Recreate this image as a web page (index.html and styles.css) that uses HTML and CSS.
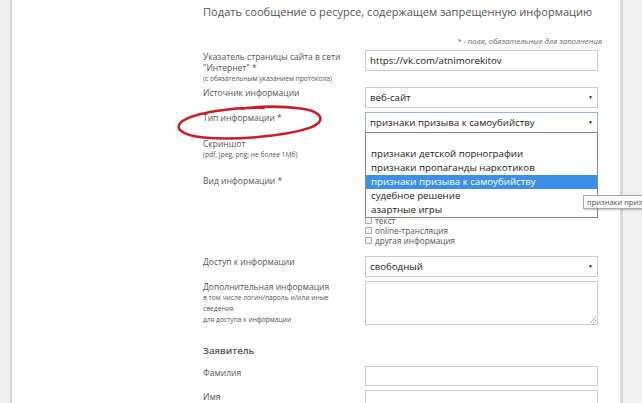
FILE: index.html
```html
<!DOCTYPE html>
<html lang="ru">

<head>
  <meta charset="UTF-8">
  <meta name="viewport" content="width=device-width, initial-scale=1.0">
  <title>Подать сообщение</title>
  <link rel="stylesheet" href="styles.css">
</head>

<body>
  <div class="side side-left"></div>

  <main class="panel">
    <h1 class="title">Подать сообщение о ресурсе, содержащем запрещенную информацию</h1>
    <p class="note">* - поля, обязательные для заполнения</p>

    <div class="row row-url">
      <div class="label">
        Указатель страницы сайта в сети<br>"Интернет" *
        <span class="hint">(с обязательным указанием протокола)</span>
      </div>
      <div class="field">
        <div class="input">https://vk.com/atnimorekitov</div>
      </div>
    </div>

    <div class="row row-select">
      <div class="label">Источник информации</div>
      <div class="field">
        <div class="select">веб-сайт<span class="arrow">▼</span></div>
      </div>
    </div>

    <div class="row row-type">
      <div class="label">Тип информации *</div>
      <div class="field">
        <div class="select focused">признаки призыва к самоубийству<span class="arrow">▼</span></div>
      </div>
    </div>

    <div class="row row-file">
      <div class="label">
        Скриншот
        <span class="hint">(pdf, jpeg, png; не более 1Мб)</span>
      </div>
      <div class="field"></div>
    </div>

    <div class="row row-kind">
      <div class="label">Вид информации *</div>
      <div class="field checks">
        <label class="check"><span class="box"></span>изображение</label>
        <label class="check"><span class="box"></span>видео</label>
        <label class="check"><span class="box"></span>аудио</label>
        <label class="check"><span class="box"></span>ссылка</label>
        <label class="check"><span class="box"></span>текст</label>
        <label class="check"><span class="box"></span>online-трансляция</label>
        <label class="check"><span class="box"></span>другая информация</label>
      </div>
    </div>

    <div class="row row-access">
      <div class="label">Доступ к информации</div>
      <div class="field">
        <div class="select">свободный<span class="arrow">▼</span></div>
      </div>
    </div>

    <div class="row row-extra">
      <div class="label">
        Дополнительная информация
        <span class="hint">в том числе логин/пароль и/или иные<br>сведения<br>для доступа к информации</span>
      </div>
      <div class="field">
        <div class="textarea"><span class="grip"></span></div>
      </div>
    </div>

    <h2 class="section">Заявитель</h2>

    <div class="row row-plain">
      <div class="label">Фамилия</div>
      <div class="field">
        <div class="input"></div>
      </div>
    </div>

    <div class="row row-plain">
      <div class="label">Имя</div>
      <div class="field">
        <div class="input"></div>
      </div>
    </div>

    <!-- open list of the "Тип информации" select -->
    <ul class="dropdown">
      <li class="empty"></li>
      <li>признаки детской порнографии</li>
      <li>признаки пропаганды наркотиков</li>
      <li class="active">признаки призыва к самоубийству</li>
      <li>судебное решение</li>
      <li>азартные игры</li>
    </ul>

    <div class="tooltip">признаки призыва к самоубийству</div>

    <svg class="marker" width="160" height="40" viewBox="0 0 160 40">
      <path d="M92 5 C60 3 22 7 8 16 C0 22 6 30 30 33 C60 37 110 35 138 27 C156 21 152 11 130 7 C112 4 90 3 70 5"
        fill="none" stroke="#cf1b25" stroke-width="2.6" stroke-linecap="round" />
    </svg>
  </main>

  <div class="side side-right"></div>
</body>

</html>
```

FILE: styles.css
```css
* {
  box-sizing: border-box;
}

html,
body {
  margin: 0;
  height: 100%;
  overflow: hidden;
}

body {
  display: flex;
  font-family: 'Open Sans', 'Noto Sans', sans-serif;
  color: #555;
  background: #fff;
}

.side {
  flex: none;
  height: 100%;
  background: #efefef;
}

.side-left {
  width: 12px;
  border-right: 2px solid #d4d4d4;
}

.side-right {
  width: 22px;
  border-left: 3px solid #d6d6d6;
  background: #f1f1f1;
}

.panel {
  position: relative;
  flex: 1;
  min-width: 0;
  padding-left: 191px;
}

.title {
  margin: 0;
  padding-top: 4px;
  font-size: 11.1px;
  font-weight: normal;
  line-height: 16px;
  white-space: nowrap;
  color: #555;
}

.note {
  width: 399px;
  margin: 16px 0 0;
  font-size: 7.8px;
  font-style: italic;
  line-height: 10px;
  text-align: right;
  color: #666;
}

.row {
  display: flex;
}

.label {
  width: 162px;
  flex: none;
  font-size: 8.5px;
  line-height: 11px;
  color: #555;
}

.hint {
  display: block;
  font-size: 6.7px;
  line-height: 11px;
}

.field {
  width: 233px;
  flex: none;
}

.input,
.select,
.textarea {
  position: relative;
  height: 21px;
  border: 1px solid #ccc;
  background: #fff;
  font-size: 9.7px;
  line-height: 19px;
  padding-left: 4px;
  color: #222;
}

.arrow {
  position: absolute;
  right: 4px;
  top: 0;
  font-size: 5px;
  color: #222;
}

.select.focused {
  border-color: #9fb4d8;
  border-bottom-color: #444;
}

.row-url {
  height: 34px;
  margin-top: 4px;
  margin-bottom: 3px;
}

.row-url .label {
  padding-top: 1px;
}

.row-select,
.row-access {
  height: 21px;
  margin-bottom: 4px;
}

.row-type {
  height: 21px;
  margin-bottom: 5px;
}

.row-file {
  height: 37px;
}

.row-kind {
  height: 70px;
  margin-bottom: 11px;
}

.checks {
  display: flex;
  flex-direction: column;
}

.check {
  display: flex;
  align-items: center;
  gap: 3px;
  height: 10px;
  font-size: 8.2px;
  color: #555;
}

.box {
  width: 7px;
  height: 7px;
  border: 1px solid #aaa;
  border-radius: 1px;
  background: #f4f4f4;
}

.row-extra {
  height: 44px;
}

.textarea {
  height: 44px;
}

.grip {
  position: absolute;
  right: 1px;
  bottom: 1px;
  width: 6px;
  height: 6px;
  background: linear-gradient(135deg, transparent 45%, #aaa 45%, #aaa 55%, transparent 55%, transparent 70%, #aaa 70%, #aaa 80%, transparent 80%);
}

.section {
  margin: 19px 0 0;
  height: 22px;
  font-size: 9.6px;
  font-weight: 600;
  line-height: 14px;
  color: #555;
}

.row-plain {
  height: 20px;
  margin-bottom: 4px;
}

.row-plain .label {
  padding-top: 1px;
}

.row-plain .input {
  height: 20px;
}

.dropdown {
  position: absolute;
  left: 353px;
  top: 132px;
  width: 233px;
  margin: 0;
  padding: 0;
  list-style: none;
  border: 1px solid #8a8a8a;
  background: #fff;
}

.dropdown li {
  height: 14px;
  padding-left: 5px;
  font-size: 9.7px;
  line-height: 14px;
  color: #222;
}

.dropdown li.empty {
  height: 14px;
}

.dropdown li.active {
  background: #3c8fe6;
  color: #fff;
}

.tooltip {
  position: absolute;
  left: 571px;
  top: 195px;
  height: 14px;
  padding: 0 3px;
  white-space: nowrap;
  font-size: 7.5px;
  line-height: 12px;
  color: #555;
  background: #fafafa;
  border: 1px solid #aaa;
  box-shadow: 1px 1px 2px rgba(0, 0, 0, .25);
}

.marker {
  position: absolute;
  left: 162px;
  top: 103px;
  width: 157px;
  transform: rotate(-2deg);
}
```
